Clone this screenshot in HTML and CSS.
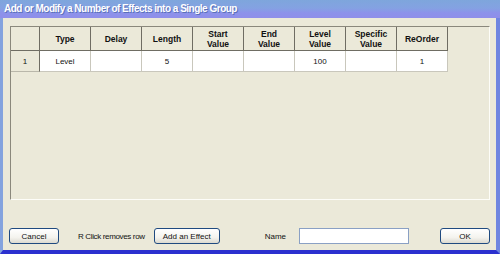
FILE: index.html
```html
<!DOCTYPE html>
<html lang="en">
<head>
    <meta charset="UTF-8">
    <title>Add or Modify a Number of Effects into a Single Group</title>
    <link rel="stylesheet" href="styles.css">
</head>
<body>
    <div class="window">
        <div class="titlebar">Add or Modify a Number of Effects into a Single Group</div>
        <div class="client">
            <div class="grid-panel">
                <table class="grid">
                    <thead>
                        <tr>
                            <th class="corner"></th>
                            <th>Type</th>
                            <th>Delay</th>
                            <th>Length</th>
                            <th>Start<br>Value</th>
                            <th>End<br>Value</th>
                            <th>Level<br>Value</th>
                            <th>Specific<br>Value</th>
                            <th>ReOrder</th>
                        </tr>
                    </thead>
                    <tbody>
                        <tr>
                            <th class="row-head">1</th>
                            <td>Level</td>
                            <td></td>
                            <td>5</td>
                            <td></td>
                            <td></td>
                            <td>100</td>
                            <td></td>
                            <td>1</td>
                        </tr>
                    </tbody>
                </table>
            </div>
            <div class="footer">
                <button class="btn btn-cancel">Cancel</button>
                <span class="hint">R Click removes row</span>
                <button class="btn btn-add">Add an Effect</button>
                <label class="name-label" for="groupName">Name</label>
                <input type="text" id="groupName" class="name-input">
                <button class="btn btn-ok">OK</button>
            </div>
        </div>
    </div>
</body>
</html>
```

FILE: styles.css
```css
* {
    box-sizing: border-box;
}

body {
    margin: 0;
    font-family: 'Liberation Sans', Arial, sans-serif;
    font-size: 8px;
    color: #111;
}

.window {
    width: 500px;
    height: 254px;
    display: flex;
    flex-direction: column;
    overflow: hidden;
}

.titlebar {
    height: 18px;
    padding: 3px 0 0 4px;
    background: linear-gradient(to bottom, #7ea6dc 0%, #84a2e2 45%, #8c92ea 70%, #8f8eea 100%);
    color: #fff;
    font-weight: bold;
    font-size: 10px;
    letter-spacing: -0.5px;
    text-shadow: 1px 1px 0 #5a70b8;
    white-space: nowrap;
}

.client {
    flex: 1;
    display: flex;
    flex-direction: column;
    background: #ebe9d9;
    border-left: 3px solid #84a3de;
    border-right: 4px solid #6f86e0;
    border-bottom: 4px solid #2b30cf;
    padding: 8px 6px 6px 7px;
}

.grid-panel {
    height: 174px;
    border-top: 1px solid #8a887c;
    border-left: 1px solid #8a887c;
    border-right: 1px solid #fdfdf8;
    border-bottom: 1px solid #fdfdf8;
}

.grid {
    border-collapse: separate;
    border-spacing: 0;
    table-layout: fixed;
}

.grid th,
.grid td {
    width: 51px;
    padding: 0;
    text-align: center;
    vertical-align: middle;
}

.grid thead th {
    height: 24px;
    background: #ebe9d9;
    font-weight: bold;
    font-size: 8.5px;
    line-height: 10px;
    border-right: 1px solid #6f6d63;
    border-bottom: 1px solid #6f6d63;
}

.grid .corner,
.grid .row-head {
    width: 29px;
}

.grid .row-head {
    background: #ebe9d9;
    font-weight: normal;
    border-right: 1px solid #6f6d63;
    border-bottom: 1px solid #b9b7aa;
}

.grid td {
    height: 21px;
    background: #fff;
    border-right: 1px solid #c9c7bc;
    border-bottom: 1px solid #c9c7bc;
}

.footer {
    margin-top: 28px;
    height: 16px;
    display: flex;
    align-items: center;
}

.btn {
    height: 16px;
    padding: 0;
    font-family: inherit;
    font-size: 8px;
    color: #111;
    border: 1px solid #1f4a80;
    border-radius: 3px;
    background: linear-gradient(to bottom, #ffffff 0%, #f4f3ee 60%, #dcdad0 100%);
}

.btn-cancel {
    width: 50px;
    margin-left: -1px;
}

.hint {
    margin-left: 19px;
    letter-spacing: -0.35px;
}

.btn-add {
    width: 66px;
    margin-left: 9px;
}

.name-label {
    margin-left: 45px;
}

.name-input {
    width: 110px;
    height: 16px;
    margin-left: 13px;
    border: 1px solid #8aa0c4;
    background: #fff;
}

.btn-ok {
    width: 50px;
    margin-left: auto;
}
```
